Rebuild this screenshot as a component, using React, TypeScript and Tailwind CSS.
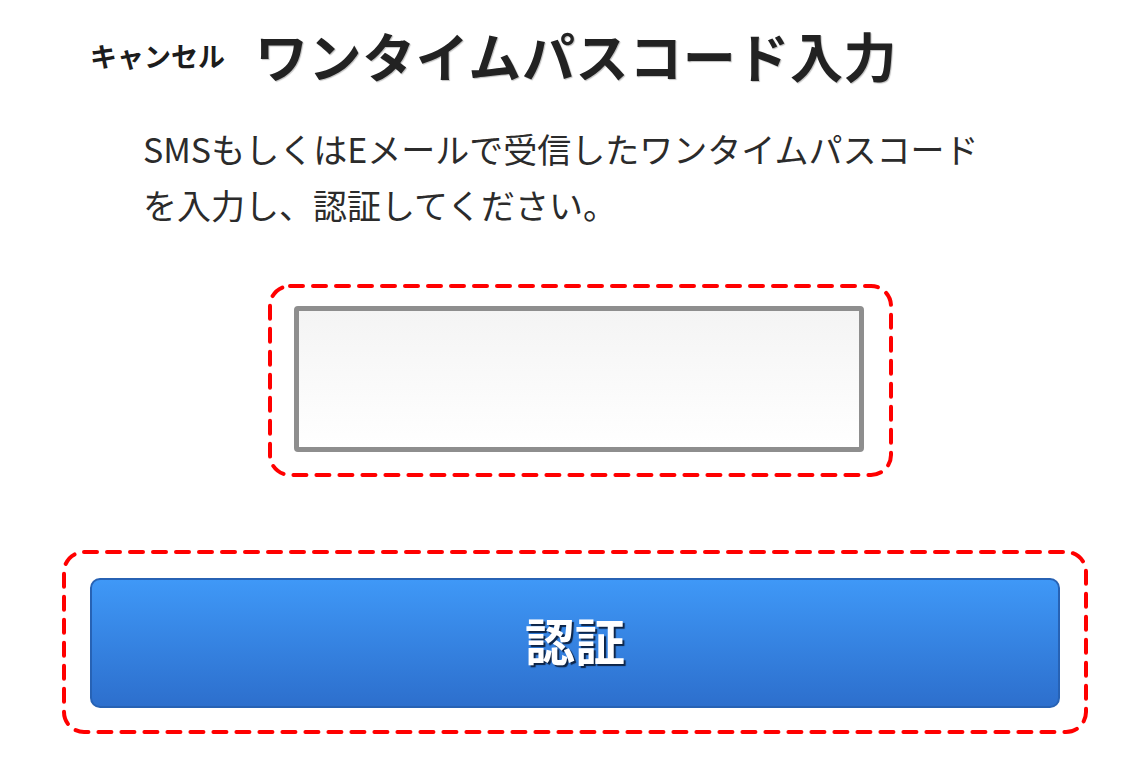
/* =============================================================
   OneTimePasscode — ワンタイムパスコード入力 screen
   Design: header row, instructions, outlined input + button
   ============================================================= */

import type { ReactNode } from "react";

const jp = "font-['Hiragino_Sans','Noto_Sans_CJK_JP','Noto_Sans',sans-serif]";

// red dashed annotation frame drawn over its content
function DashedFrame({ children, className }: { children: ReactNode; className: string }) {
  return (
    <div className={`relative ${className}`}>
      <svg className="pointer-events-none absolute inset-0 h-full w-full overflow-visible">
        <rect
          x="2"
          y="2"
          width="calc(100% - 4px)"
          height="calc(100% - 4px)"
          rx="20"
          fill="none"
          stroke="#ff0000"
          strokeWidth="4"
          strokeDasharray="13 10"
          strokeLinecap="round"
        />
      </svg>
      {children}
    </div>
  );
}

export default function App() {
  return (
    <div className={`h-[762px] w-[1146px] overflow-hidden bg-white ${jp}`}>
      {/* Header */}
      <div className="flex items-center pt-[27px]">
        <span className="ml-[90px] text-[27px] font-semibold leading-none text-[#1c1c1c]">
          キャンセル
        </span>
        <h1 className="ml-[30px] text-[53px] font-semibold leading-[56px] tracking-[0.6px] text-[#222] [text-shadow:1px_1px_1px_rgba(0,0,0,0.25)]">
          ワンタイムパスコード入力
        </h1>
      </div>

      {/* Instructions */}
      <p className="ml-[143px] mt-[38px] text-[34px] leading-[56px] text-[#2b2b2b]">
        SMSもしくはEメールで受信したワンタイムパスコード
        <br />
        を入力し、認証してください。
      </p>

      {/* Passcode input */}
      <DashedFrame className="ml-[268px] mt-[51px] h-[193px] w-[625px] px-[26px] pt-[22px]">
        <input
          type="text"
          aria-label="ワンタイムパスコード"
          className="block h-[146px] w-[570px] rounded-[4px] border-[5px] border-[#8e8e8e] bg-gradient-to-b from-[#f4f4f4] to-white outline-none"
        />
      </DashedFrame>

      {/* Submit */}
      <DashedFrame className="ml-[62px] mt-[73px] h-[184px] w-[1026px] px-[28px] pt-[28px]">
        <button
          type="button"
          className="flex h-[130px] w-[970px] items-center justify-center rounded-[10px] border-2 border-[#2762b4] bg-gradient-to-b from-[#3f98f7] to-[#2d6fcd] pb-[8px] text-[50px] font-semibold leading-none text-white [text-shadow:2px_2px_1px_#0d2446]"
        >
          認証
        </button>
      </DashedFrame>
    </div>
  );
}
